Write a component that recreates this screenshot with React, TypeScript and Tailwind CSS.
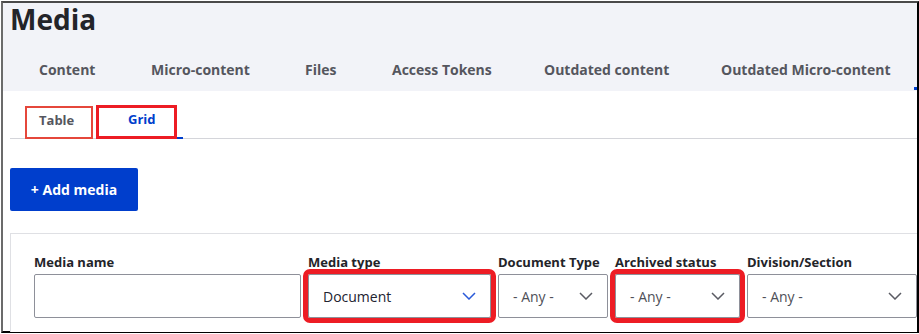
const tabs = [
  { label: "Content", w: "w-[112px]" },
  { label: "Micro-content", w: "w-[154px]" },
  { label: "Files", w: "w-[87px]" },
  { label: "Access Tokens", w: "w-[152px]" },
  { label: "Outdated content", w: "w-[177px]" },
  { label: "Outdated Micro-content", w: "w-[222px]" },
];

function Chevron({ blue }: { blue?: boolean }) {
  return (
    <svg
      width="14"
      height="8"
      viewBox="0 0 14 8"
      fill="none"
      className={blue ? "text-[#2a5ad9]" : "text-[#5a5b63]"}
    >
      <path d="M1 1l6 6 6-6" stroke="currentColor" strokeWidth="1.5" />
    </svg>
  );
}

function Select({
  value,
  w,
  blue,
  marked,
  dark,
}: {
  value: string;
  w: string;
  blue?: boolean;
  marked?: boolean;
  dark?: boolean;
}) {
  return (
    <div
      className={`${w} h-[44px] flex items-center justify-between border border-[#8e9099] rounded-[2px] bg-white pl-[14px] pr-[14px] ${
        marked ? "outline-[5px] outline-solid outline-[#ed1c24]" : ""
      }`}
    >
      <span
        className={`text-[14px] ${dark ? "text-[#222330]" : "text-[#4f5058]"}`}
      >
        {value}
      </span>
      <Chevron blue={blue} />
    </div>
  );
}

function Field({
  label,
  children,
}: {
  label: string;
  children: React.ReactNode;
}) {
  return (
    <div className="flex flex-col shrink-0">
      <label className="text-[13px] leading-[18px] font-bold text-[#232429] mb-[3px]">
        {label}
      </label>
      {children}
    </div>
  );
}

export default function App() {
  return (
    <div className="w-[919px] h-[334px] bg-white pl-[1px] pt-[1px] font-['Open_Sans',sans-serif]">
      <div className="w-[918px] h-[332px] border-2 border-t-[#4a4a4a] border-l-[#6b6b6b] border-r-black border-b-black overflow-x-clip">
        <div className="w-[960px]">
          {/* header */}
          <div className="flex flex-col bg-[#f2f3f8] h-[88px] pl-[7px]">
            <h1 className="text-[28px] leading-[38px] -mt-[3px] font-bold text-[#232429]">
              Media
            </h1>
            <nav className="flex mt-[12px]">
              {tabs.map((t) => (
                <a
                  key={t.label}
                  className={`${t.w} shrink-0 pl-[29px] py-[10px] text-[14px] leading-[20px] font-bold text-[#55565e] whitespace-nowrap`}
                >
                  {t.label}
                </a>
              ))}
              <a className="shrink-0 w-[80px] h-[40px] border-b-[3px] border-[#003ecc]" />
            </nav>
          </div>

          <div className="pl-[7px]">
            {/* secondary tabs */}
            <div className="relative pt-[13px]">
              <div className="flex border-b border-[#d4d5da]">
                <a className="w-[90px] h-[34px] pl-[29px] flex items-center text-[13px] font-bold text-[#55565e]">
                  Table
                </a>
                <a className="w-[83px] h-[35px] -mb-px pl-[28px] pb-[2px] flex items-center text-[13px] font-bold text-[#003ecc] border-b-2 border-[#003ecc]">
                  Grid
                </a>
              </div>
              <div className="absolute left-[15px] top-[15px] w-[68px] h-[33px] border-2 border-[#e5473b]" />
              <div className="absolute left-[86px] top-[14px] w-[81px] h-[34px] border-[3px] border-[#ed1c24]" />
            </div>

            {/* add button */}
            <button className="mt-[29px] w-[128px] h-[43px] rounded-[2px] bg-[#003ecc] text-white text-[14px] font-bold">
              + Add media
            </button>

            {/* filters, cut off by the frame at the bottom */}
            <div className="mt-[22px] border border-b-0 border-[#dfe0e4] bg-white pl-[23px] pt-[19px] pb-[14px]">
              <div className="flex gap-[7px]">
                <Field label="Media name">
                  <div className="w-[267px] h-[44px] border border-[#8e9099] rounded-[2px] bg-white" />
                </Field>
                <Field label="Media type">
                  <Select value="Document" w="w-[183px]" blue marked dark />
                </Field>
                <Field label="Document Type">
                  <Select value="- Any -" w="w-[110px]" />
                </Field>
                <Field label="Archived status">
                  <Select value="- Any -" w="w-[125px]" marked />
                </Field>
                <Field label="Division/Section">
                  <Select value="- Any -" w="w-[170px]" />
                </Field>
              </div>
            </div>
          </div>
        </div>
      </div>
    </div>
  );
}
